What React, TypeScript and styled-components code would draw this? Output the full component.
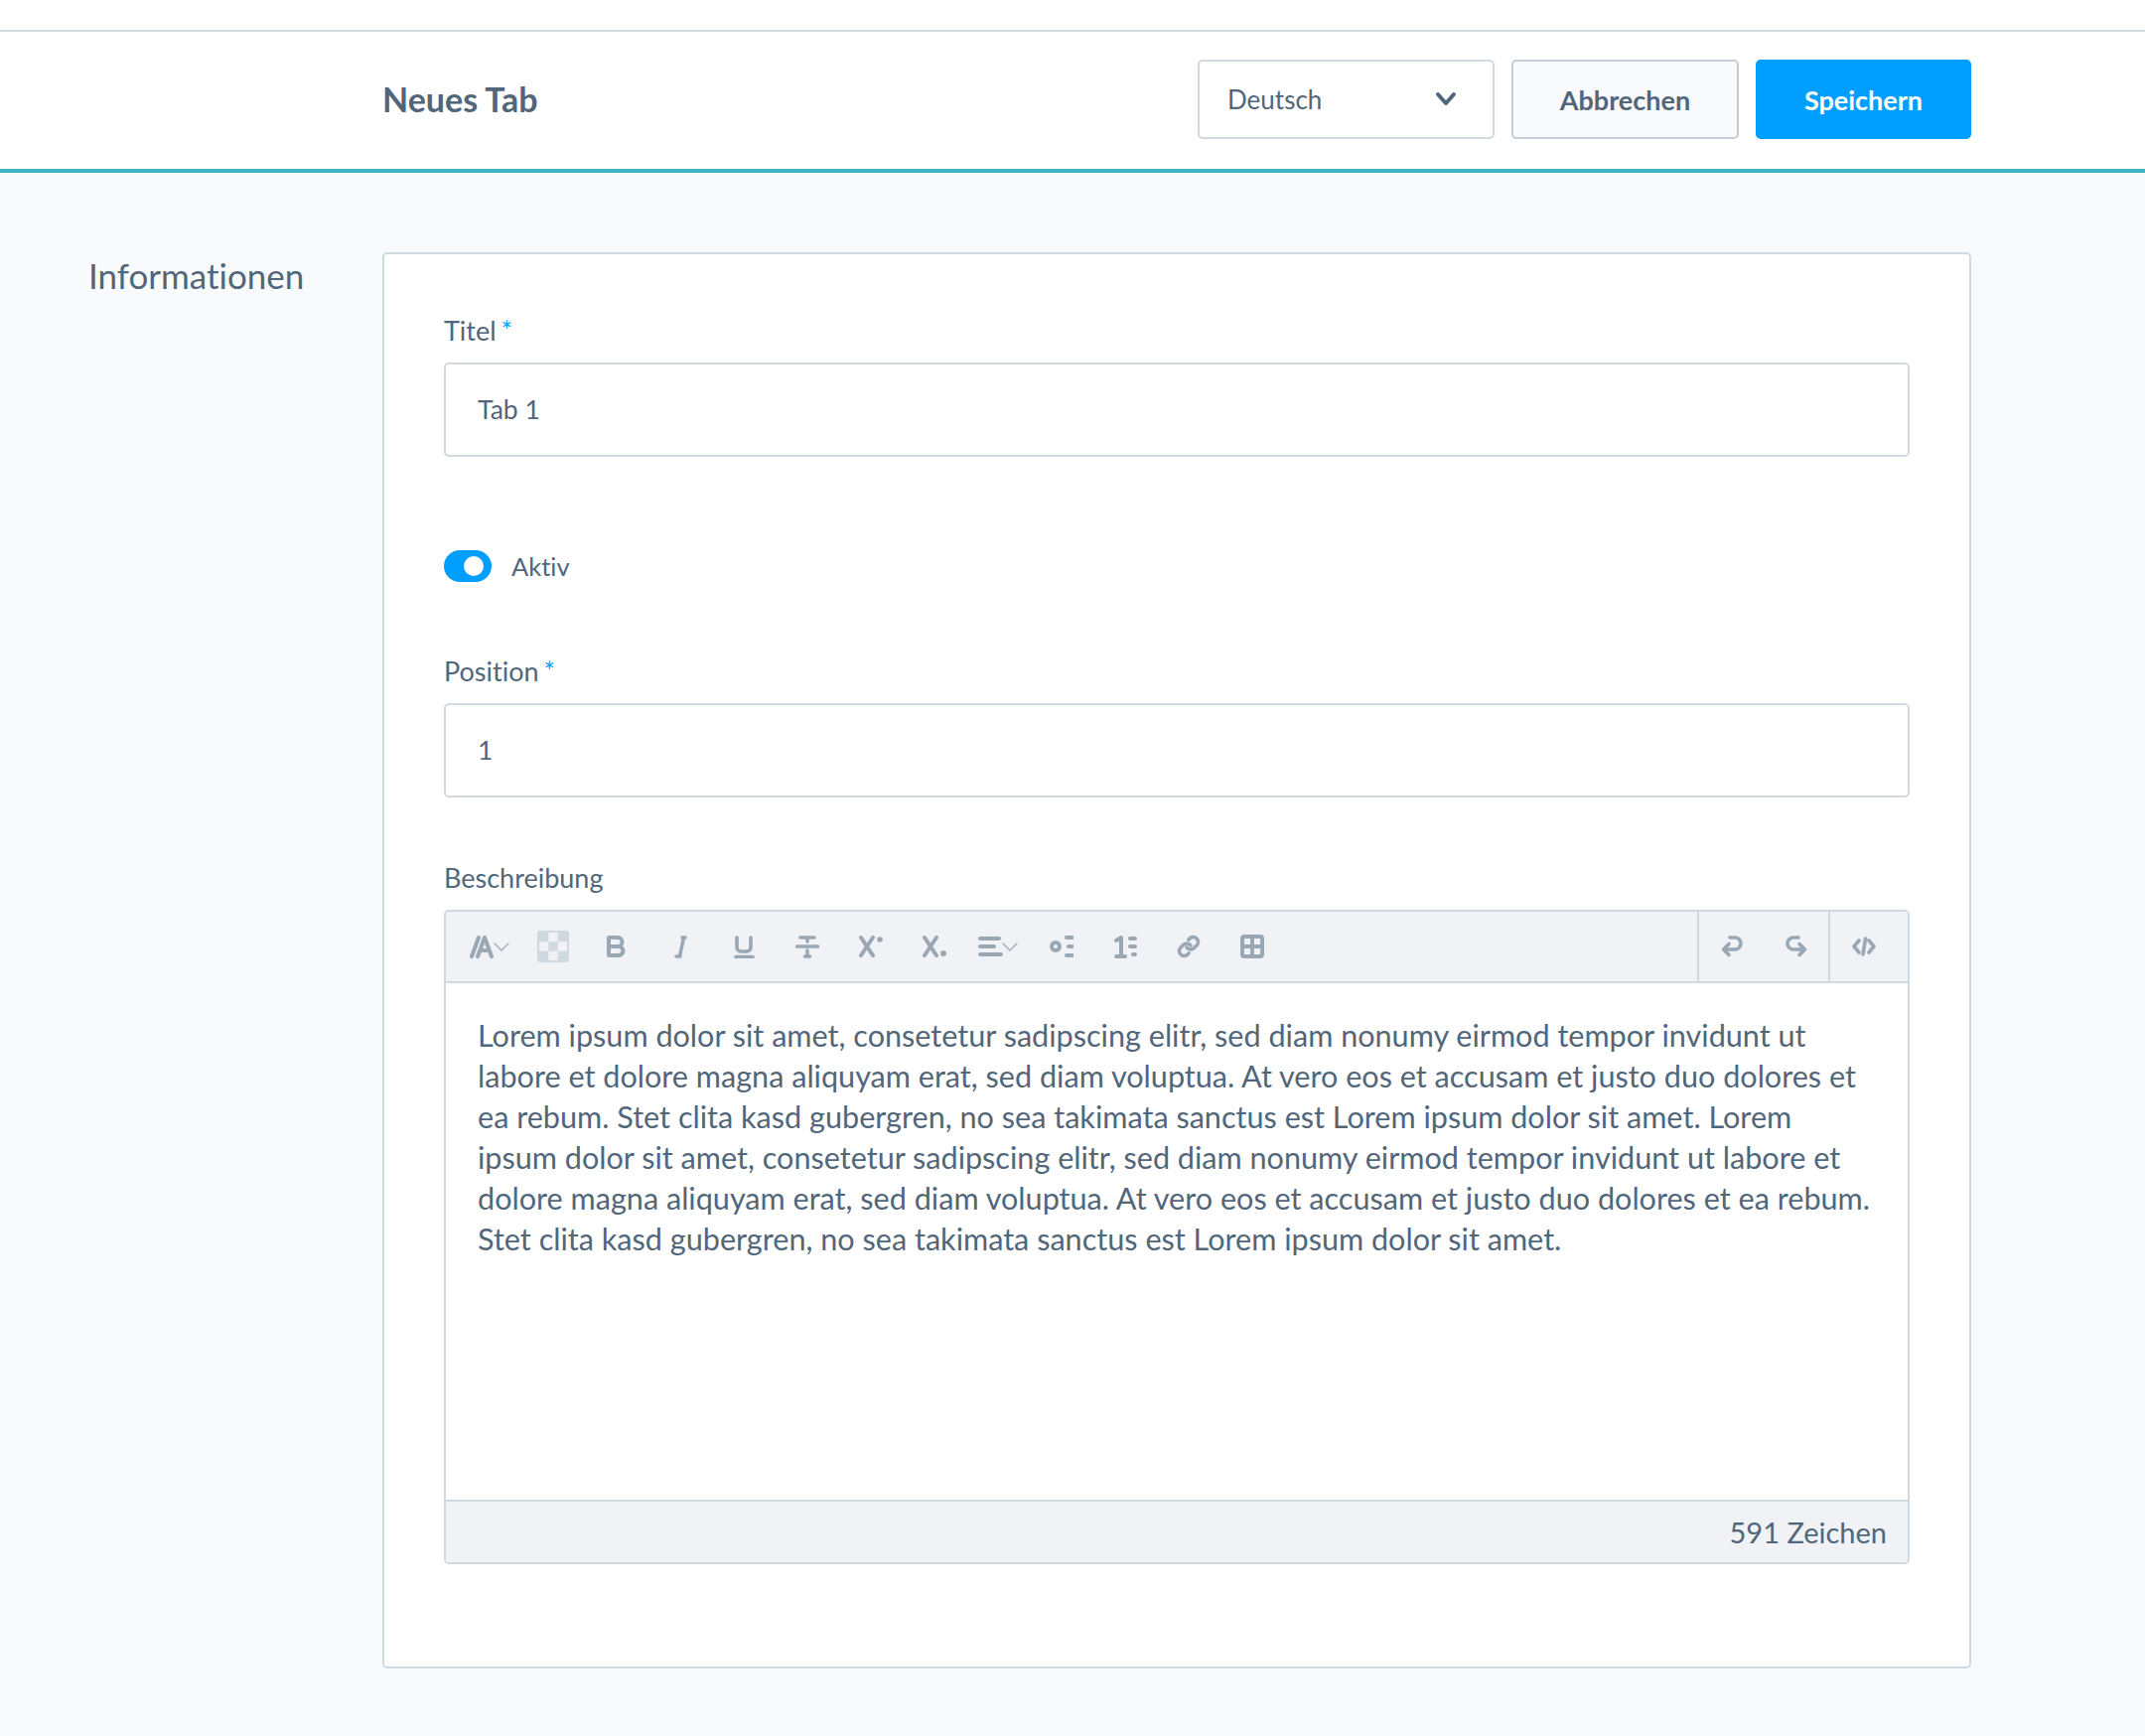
import React from "react";
import styled, { createGlobalStyle } from "styled-components";

const GlobalStyle = createGlobalStyle`
  html, body {
    margin: 0;
    padding: 0;
    background: #f9fafb;
  }
  body {
    font-family: "Lato", "Noto Sans", sans-serif;
    font-variant-ligatures: none;
    color: #52667a;
  }
  * {
    box-sizing: border-box;
  }
`;

const Page = styled.div`
  min-height: 1748px;
  padding-top: 30px;
  background: linear-gradient(#fff, #fff) top / 100% 30px no-repeat, #f9fafb;
`;

const Header = styled.header`
  display: flex;
  align-items: center;
  height: 144px;
  padding: 0 175px 2px 385px;
  background: #fff;
  border-top: 2px solid #d1d9e0;
  border-bottom: 4px solid #40b3c2;
`;

const Title = styled.h1`
  flex: 1;
  margin: 0;
  padding-bottom: 2px;
  font-size: 34px;
  font-weight: 700;
  color: #52667a;
`;

const Actions = styled.div`
  display: flex;
  gap: 17px;
`;

const Select = styled.div`
  display: flex;
  align-items: center;
  justify-content: space-between;
  width: 299px;
  height: 80px;
  padding: 0 35px 0 28px;
  background: #fff;
  border: 2px solid #d1d9e0;
  border-radius: 5px;
  font-size: 26px;
`;

const Button = styled.button<{ $primary?: boolean }>`
  height: 80px;
  width: ${(p) => (p.$primary ? "217px" : "229px")};
  padding: 0;
  border: 2px solid ${(p) => (p.$primary ? "#009fff" : "#c3ced8")};
  border-radius: 5px;
  background: ${(p) => (p.$primary ? "#009fff" : "#f9fafb")};
  color: ${(p) => (p.$primary ? "#fff" : "#52667a")};
  font-family: inherit;
  font-size: 27px;
  font-weight: 700;
`;

const Content = styled.main`
  display: grid;
  grid-template-columns: 296px 1600px;
  padding: 80px 0 0 89px;
`;

const SectionTitle = styled.h2`
  margin: 0;
  padding-top: 2px;
  font-size: 35px;
  line-height: 42px;
  font-weight: 400;
  color: #52667a;
`;

const Card = styled.section`
  display: flex;
  flex-direction: column;
  height: 1426px;
  padding: 61px 60px 0;
  background: #fff;
  border: 2px solid #d1d9e0;
  border-radius: 5px;
`;

const Field = styled.div<{ $top?: number }>`
  margin-top: ${(p) => p.$top ?? 0}px;
`;

const Label = styled.label`
  display: block;
  height: 32px;
  margin-bottom: 16px;
  font-size: 27px;
  line-height: 32px;
  color: #52667a;
`;

const Required = styled.span`
  margin-left: -2px;
  color: #009fff;
`;

const Input = styled.div`
  display: flex;
  align-items: center;
  height: 95px;
  padding: 0 32px 2px;
  background: #fff;
  border: 2px solid #d1d9e0;
  border-radius: 5px;
  font-size: 26.5px;
`;

const ToggleRow = styled.div`
  display: flex;
  align-items: center;
  gap: 20px;
  height: 32px;
  margin-top: 94px;
  font-size: 25.5px;
`;

const Toggle = styled.span`
  position: relative;
  width: 48px;
  height: 32px;
  border-radius: 16px;
  background: #009fff;

  &::after {
    content: "";
    position: absolute;
    top: 6px;
    right: 8px;
    width: 20px;
    height: 20px;
    border-radius: 50%;
    background: #fff;
  }
`;

const Editor = styled.div`
  display: flex;
  flex-direction: column;
  height: 659px;
  border: 2px solid #d1d9e0;
  border-radius: 5px;
  overflow: hidden;
`;

const Toolbar = styled.div`
  display: flex;
  justify-content: space-between;
  flex: none;
  height: 72px;
  padding-left: 12px;
  background: #f0f2f5;
  border-bottom: 2px solid #d1d9e0;
`;

const ToolGroup = styled.div`
  display: flex;
`;

const RightTools = styled.div`
  display: flex;
`;

const RightGroup = styled.div<{ $pad?: number }>`
  display: flex;
  padding-right: ${(p) => p.$pad ?? 0}px;
  border-left: 2px solid #d1d9e0;
`;

const Tool = styled.span<{ $width?: number }>`
  display: flex;
  align-items: center;
  justify-content: center;
  width: ${(p) => p.$width ?? 64}px;
  height: 70px;
  color: #9aa8b5;
`;

const Body = styled.div`
  flex: 1;
  padding: 32px 32px 0;
  background: #fff;
  font-size: 30.6px;
  line-height: 41px;
  color: #52667a;
`;

const BodyLine = styled.div`
  white-space: nowrap;
`;

const Footer = styled.div`
  display: flex;
  align-items: center;
  justify-content: flex-end;
  flex: none;
  height: 63px;
  padding-right: 21px;
  background: #f0f2f5;
  border-top: 2px solid #d1d9e0;
  font-size: 29px;
`;

const Icon: React.FC<{ children: React.ReactNode; width?: number; sw?: number }> = ({
  children,
  width = 24,
  sw = 4,
}) => (
  <svg
    width={width}
    height={24}
    viewBox={`0 0 ${width} 24`}
    fill="none"
    stroke="currentColor"
    strokeWidth={sw}
    strokeLinecap="round"
    strokeLinejoin="round"
  >
    {children}
  </svg>
);

const Checker = () => (
  <svg width={32} height={32} viewBox="0 0 32 32">
    <rect width={32} height={32} rx={3} fill="#d1d9e0" />
    <rect x={11.33} y={2} width={9.33} height={9.33} fill="#f0f2f5" />
    <rect x={2} y={11.33} width={9.33} height={9.33} fill="#f0f2f5" />
    <rect x={20.67} y={11.33} width={9.33} height={9.33} fill="#f0f2f5" />
    <rect x={11.33} y={20.67} width={9.33} height={9.33} fill="#f0f2f5" />
  </svg>
);

const Chevron = () => (
  <svg width={24} height={16} viewBox="0 0 24 16" fill="none" stroke="#52667a" strokeWidth={4} strokeLinecap="round" strokeLinejoin="round">
    <path d="M4 3l8 9 8-9" />
  </svg>
);

const leftTools: React.ReactNode[] = [
  <Icon width={40}>
    <path d="M2 22L9 3M8 22L15 3l7 19M11 16h8" />
    <path d="M25 9l7 7 7-7" strokeWidth={1.2} />
  </Icon>,
  <Checker />,
  <Icon>
    <path d="M4 3h9a4.5 4.5 0 0 1 0 9H4M4 12h10a4.5 4.5 0 0 1 0 9H4M4 3v18" />
  </Icon>,
  <Icon sw={3.6}>
    <path d="M14 3h3M15.5 3l-4 19M8 22h4" />
  </Icon>,
  <Icon sw={3.6}>
    <path d="M5 3v10a4 4 0 0 0 4 4h6a4 4 0 0 0 4-4V3M4 22.5h17" />
  </Icon>,
  <Icon sw={3.6}>
    <path d="M5 3h14M12 3v4M1.5 12h21M12 16v5M9.5 22h5" />
  </Icon>,
  <Icon>
    <path d="M2 3l12 18M14 3L2 21" />
    <circle cx={21} cy={5} r={2.8} fill="currentColor" stroke="none" />
  </Icon>,
  <Icon>
    <path d="M2 3l12 18M14 3L2 21" />
    <circle cx={21} cy={19} r={3} fill="currentColor" stroke="none" />
  </Icon>,
  <Icon width={40}>
    <path d="M2 4h19M2 12h14M2 20h21" />
    <path d="M25 9l7 7 7-7" strokeWidth={1.2} />
  </Icon>,
  <Icon>
    <circle cx={6} cy={12} r={4} />
    <path d="M17 3h6M19 12h4M17 21h6" />
  </Icon>,
  <Icon>
    <path d="M3 6l5-3v19M3 22h9M17 4h5M17 12h5M20 20h2" />
  </Icon>,
  <Icon sw={3.6}>
    <path d="M10 13a5 5 0 0 0 7.5.5l3-3a5 5 0 0 0-7-7l-1.7 1.7" />
    <path d="M14 11a5 5 0 0 0-7.5-.5l-3 3a5 5 0 0 0 7 7l1.7-1.7" />
  </Icon>,
  <Icon>
    <rect x={2} y={2} width={20} height={20} rx={2} />
    <path d="M12 2v20M2 12h20" />
  </Icon>,
];

const bodyLines = [
  "Lorem ipsum dolor sit amet, consetetur sadipscing elitr, sed diam nonumy eirmod tempor invidunt ut",
  "labore et dolore magna aliquyam erat, sed diam voluptua. At vero eos et accusam et justo duo dolores et",
  "ea rebum. Stet clita kasd gubergren, no sea takimata sanctus est Lorem ipsum dolor sit amet. Lorem",
  "ipsum dolor sit amet, consetetur sadipscing elitr, sed diam nonumy eirmod tempor invidunt ut labore et",
  "dolore magna aliquyam erat, sed diam voluptua. At vero eos et accusam et justo duo dolores et ea rebum.",
  "Stet clita kasd gubergren, no sea takimata sanctus est Lorem ipsum dolor sit amet.",
];

export default function App() {
  return (
    <Page>
      <GlobalStyle />
      <Header>
        <Title>Neues Tab</Title>
        <Actions>
          <Select>
            Deutsch
            <Chevron />
          </Select>
          <Button>Abbrechen</Button>
          <Button $primary>Speichern</Button>
        </Actions>
      </Header>
      <Content>
        <SectionTitle>Informationen</SectionTitle>
        <Card>
          <Field>
            <Label>
              Titel <Required>*</Required>
            </Label>
            <Input>Tab 1</Input>
          </Field>
          <ToggleRow>
            <Toggle />
            Aktiv
          </ToggleRow>
          <Field $top={74}>
            <Label>
              Position <Required>*</Required>
            </Label>
            <Input>1</Input>
          </Field>
          <Field $top={65}>
            <Label>Beschreibung</Label>
            <Editor>
              <Toolbar>
                <ToolGroup>
                  {leftTools.map((icon, i) => (
                    <Tool key={i}>{icon}</Tool>
                  ))}
                </ToolGroup>
                <RightTools>
                  <RightGroup>
                    <Tool $width={65}>
                      <Icon sw={3.6}>
                        <path d="M10 3h5a6 6 0 0 1 0 12H4M9 9.5L3.5 15 9 20.5" />
                      </Icon>
                    </Tool>
                    <Tool $width={65}>
                      <Icon sw={3.6}>
                        <path d="M14 3H9a6 6 0 0 0 0 12h11M15 9.5l5.5 5.5-5.5 5.5" />
                      </Icon>
                    </Tool>
                  </RightGroup>
                  <RightGroup $pad={11}>
                    <Tool $width={67}>
                      <Icon sw={3.6}>
                        <path d="M7 6l-5 6 5 6M17 6l5 6-5 6M13.5 4l-2.5 16" />
                      </Icon>
                    </Tool>
                  </RightGroup>
                </RightTools>
              </Toolbar>
              <Body>
                {bodyLines.map((line) => (
                  <BodyLine key={line}>{line}</BodyLine>
                ))}
              </Body>
              <Footer>591 Zeichen</Footer>
            </Editor>
          </Field>
        </Card>
      </Content>
    </Page>
  );
}
